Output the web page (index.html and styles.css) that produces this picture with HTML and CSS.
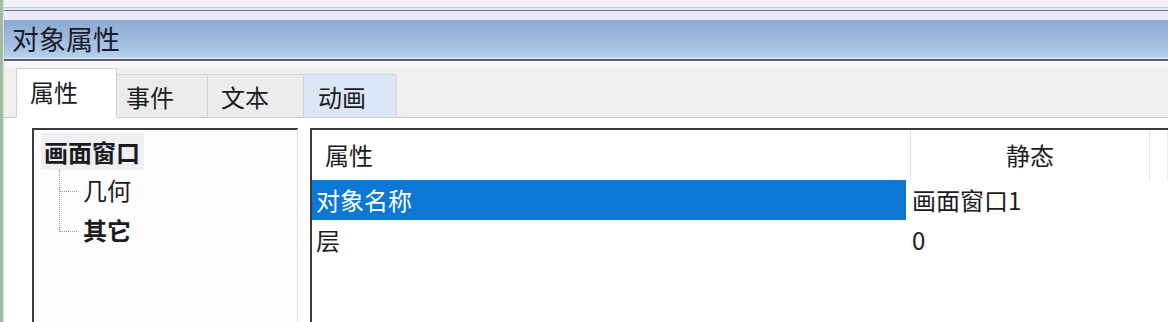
FILE: index.html
```html
<!DOCTYPE html>
<html lang="zh-CN">
<head>
<meta charset="utf-8">
<title>对象属性</title>
<link rel="stylesheet" href="styles.css">
</head>
<body>
<div class="win">
  <div class="edge"></div>
  <div class="main">
    <div class="topbar"></div>
    <div class="titlebar">对象属性</div>
    <div class="tabarea">
      <div class="tabs">
        <div class="tab active">属性</div>
        <div class="tab">事件</div>
        <div class="tab">文本</div>
        <div class="tab hover">动画</div>
      </div>
      <div class="panel">
        <div class="tree">
          <div class="node root"><span class="rootlabel">画面窗口</span></div>
          <div class="children">
            <div class="node child"><span class="dots"></span>几何</div>
            <div class="node child bold"><span class="dots"></span>其它</div>
          </div>
        </div>
        <div class="grid">
          <div class="head">
            <div class="hcell c1">属性</div>
            <div class="hcell c2">静态</div>
            <div class="hcell c3"></div>
          </div>
          <div class="row">
            <div class="cell c1 selected"><span class="sel">对象名称</span></div>
            <div class="cell c2">画面窗口1</div>
          </div>
          <div class="row">
            <div class="cell c1">层</div>
            <div class="cell c2">0</div>
          </div>
        </div>
      </div>
    </div>
  </div>
</div>
</body>
</html>
```
FILE: styles.css
```css
* { box-sizing: border-box; }
html, body {
  margin: 0;
  padding: 0;
  width: 1168px;
  height: 322px;
  overflow: hidden;
  background: #ffffff;
  font-family: "Noto Sans CJK SC", "Noto Sans", "Liberation Sans", sans-serif;
  color: #1b1b22;
}
.win {
  display: flex;
  width: 1168px;
  height: 322px;
}
.edge {
  width: 4px;
  flex: none;
  background: linear-gradient(to right, #9fb59f 0, #a9c0a9 3px, #d8dcd8 3px);
}
.main {
  flex: 1;
  display: flex;
  flex-direction: column;
  min-width: 0;
}
.topbar {
  height: 20px;
  flex: none;
  background: linear-gradient(to bottom,
    #f1f2f7 0, #f1f2f7 7px,
    #aed9ef 7px, #aed9ef 8px,
    #e4e8f1 8px, #e4e8f1 10px,
    #6c7282 10px, #6c7282 11px,
    #e9ebf8 11px, #e9ebf8 20px);
}
.titlebar {
  height: 41px;
  flex: none;
  padding-left: 8px;
  font-size: 27px;
  line-height: 38px;
  color: #1a1c28;
  background: linear-gradient(to bottom, #8daad3 0, #a5c1e3 26px, #b4d0ed 37px, #dde4ef 38px, #dde4ef 39px, #5c6272 39px, #5c6272 41px);
}
.tabarea {
  flex: 1;
  display: flex;
  flex-direction: column;
  background: linear-gradient(to bottom, #f7f7fa 0, #f7f7fa 6px, #f0f0f0 7px);
}
.tabs {
  display: flex;
  align-items: flex-end;
  height: 57px;
  padding-left: 12px;
  border-bottom: 1px solid #c9c9c9;
  flex: none;
}
.tab {
  height: 44px;
  margin-bottom: -1px;
  border: 1px solid #d3d3d3;
  border-bottom-color: #c9c9c9;
  background: #ececec;
  font-size: 24px;
  line-height: 44px;
  padding-left: 9px;
}
.tab:nth-child(2) { width: 91px; border-left: none; }
.tab:nth-child(3) { width: 96px; border-left: none; padding-left: 13px; }
.tab:nth-child(4) { width: 93px; border-left: none; padding-left: 14px; }
.tab.active {
  width: 101px;
  height: 50px;
  background: #ffffff;
  border-color: #d0d0d0;
  border-bottom: 1px solid #ffffff;
  padding-left: 13px;
  line-height: 46px;
  position: relative;
  z-index: 1;
}
.tab.hover {
  background: #dce7f6;
  border-color: #cfd9e6;
}
.panel {
  flex: 1;
  display: flex;
  gap: 12px;
  padding: 10px 0 0 28px;
  background: #ffffff;
  min-height: 0;
}
.tree {
  width: 266px;
  flex: none;
  border-top: 2px solid #3a3a3e;
  border-left: 2px solid #3a3a3e;
  border-right: 1px solid #e2e2e6;
  background: #fcfcfd;
  padding: 3px 0 0 7px;
}
.node {
  font-size: 24px;
  height: 40px;
  line-height: 38px;
}
.root {
  font-weight: bold;
  height: 37px;
}
.rootlabel {
  display: inline-block;
  background: #efeff1;
  padding: 0 4px 0 3px;
  height: 37px;
}
.children {
  margin-left: 18px;
  border-left: 1px dotted #9a9a9a;
  height: 62px;
}
.child {
  display: flex;
  align-items: center;
  height: 40px;
}
.dots {
  width: 17px;
  border-top: 1px dotted #9a9a9a;
  margin-right: 6px;
  margin-top: 2px;
}
.bold { font-weight: bold; }
.grid {
  flex: 1;
  border-top: 2px solid #3a3a3e;
  border-left: 2px solid #3a3a3e;
  background: #ffffff;
  font-size: 24px;
  display: flex;
  flex-direction: column;
}
.head {
  display: flex;
  height: 50px;
  align-items: stretch;
}
.hcell {
  line-height: 50px;
}
.hcell.c1 {
  width: 599px;
  padding-left: 13px;
  border-right: 1px solid #e4e4e6;
}
.hcell.c2 {
  width: 239px;
  text-align: center;
  border-right: 1px solid #e4e4e6;
}
.hcell.c3 { flex: 1; border-right: 1px solid #ececf0; }
.row {
  display: flex;
  height: 40px;
}
.cell {
  line-height: 40px;
}
.cell.c1 {
  width: 600px;
  padding-left: 4px;
}
.cell.c1.selected { padding-left: 0; }
.sel {
  display: block;
  width: 594px;
  height: 40px;
  background: #0b78d6;
  color: #ffffff;
  padding-left: 4px;
}
.cell.c2 {
  flex: 1;
}
```
